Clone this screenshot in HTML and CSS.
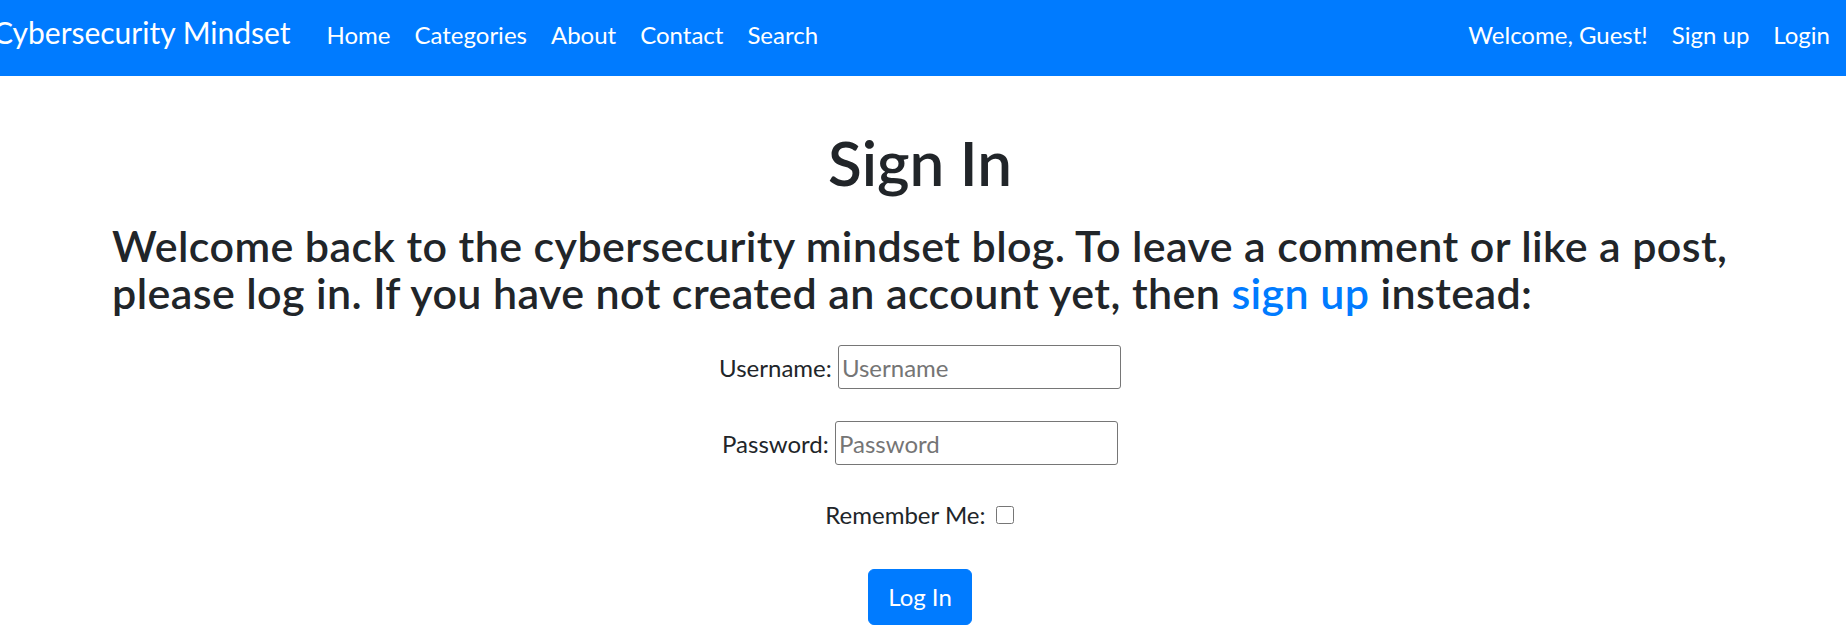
FILE: index.html
```html
<!DOCTYPE html>
<html lang="en">
<head>
<meta charset="utf-8">
<title>Sign In - Cybersecurity Mindset</title>
<link rel="stylesheet" href="styles.css">
</head>
<body>
<nav class="navbar">
  <a class="brand" href="#">Cybersecurity Mindset</a>
  <ul class="nav-list nav-main">
    <li><a class="nav-link" href="#">Home</a></li>
    <li><a class="nav-link" href="#">Categories</a></li>
    <li><a class="nav-link" href="#">About</a></li>
    <li><a class="nav-link" href="#">Contact</a></li>
    <li><a class="nav-link" href="#">Search</a></li>
  </ul>
  <ul class="nav-list nav-user">
    <li><span class="nav-link">Welcome, Guest!</span></li>
    <li><a class="nav-link" href="#">Sign up</a></li>
    <li><a class="nav-link" href="#">Login</a></li>
  </ul>
</nav>
<main class="page">
  <h1 class="title">Sign In</h1>
  <h3 class="intro"><span class="intro-part">Welcome back to the cybersecurity mindset blog. To leave a comment or like a post,</span> <span class="intro-part">please log in. If you have not created an account yet, then</span> <a class="link" href="#">sign up</a> <span class="intro-part">instead:</span></h3>
  <form class="login-form">
    <p class="form-row"><label for="id_login">Username:</label> <input class="text-input" type="text" id="id_login" name="login" placeholder="Username"></p>
    <p class="form-row"><label for="id_password">Password:</label> <input class="text-input" type="password" id="id_password" name="password" placeholder="Password"></p>
    <p class="form-row form-row-last"><label for="id_remember">Remember Me:</label> <input class="checkbox" type="checkbox" id="id_remember" name="remember"></p>
    <p class="form-row"><button class="btn" type="submit">Log In</button></p>
  </form>
</main>
</body>
</html>
```
FILE: styles.css
```css
html, body {
  margin: 0;
  padding: 0;
}

body {
  font-family: "Lato", "Liberation Sans", sans-serif;
  font-size: 24px;
  line-height: 36px;
  color: #212529;
  background: #ffffff;
}

/* Navbar */
.navbar {
  display: flex;
  align-items: baseline;
  box-sizing: border-box;
  height: 76px;
  padding: 10px 4px 0 0;
  background: #007bff;
}

.brand {
  margin-left: -7px;
  margin-right: 24px;
  font-size: 30px;
  line-height: 45px;
  color: #ffffff;
  text-decoration: none;
  white-space: nowrap;
}

.nav-list {
  display: flex;
  align-items: baseline;
  margin: 0;
  padding: 0;
  list-style: none;
}

.nav-main {
  flex: 1;
}

.nav-link {
  display: block;
  padding: 0 12px;
  color: #ffffff;
  text-decoration: none;
  white-space: nowrap;
}

/* Page */
.page {
  padding: 0 118px 0 112px;
}

.title {
  margin: 49px 0 23px;
  font-size: 62px;
  line-height: 1.2;
  font-weight: 600;
  text-align: center;
}

.intro {
  margin: 0 -60px 29px 0;
  font-size: 43px;
  line-height: 47px;
  font-weight: 600;
  letter-spacing: 0.4px;
}

.link {
  color: #007bff;
  text-decoration: none;
}

/* Form */
.login-form {
  margin: 0;
}

.form-row {
  margin: 0 0 32px;
  text-align: center;
}

.form-row-last {
  margin-bottom: 36px;
}

.text-input {
  box-sizing: border-box;
  width: 283px;
  height: 44px;
  margin: 0;
  padding: 3px 3px;
  border: 1px solid #767676;
  border-radius: 3px;
  font-family: inherit;
  font-size: 24px;
  line-height: 36px;
  color: #212529;
  background: #ffffff;
}

.text-input::placeholder {
  color: #757575;
  opacity: 1;
}

.checkbox {
  width: 18px;
  height: 18px;
  margin: 0 1px 1px 4px;
  vertical-align: baseline;
}

.btn {
  margin: 0;
  padding: 9px 19px;
  border: 1px solid #007bff;
  border-radius: 6px;
  font-family: inherit;
  font-size: 24px;
  line-height: 36px;
  color: #ffffff;
  background: #007bff;
  cursor: pointer;
}
```
